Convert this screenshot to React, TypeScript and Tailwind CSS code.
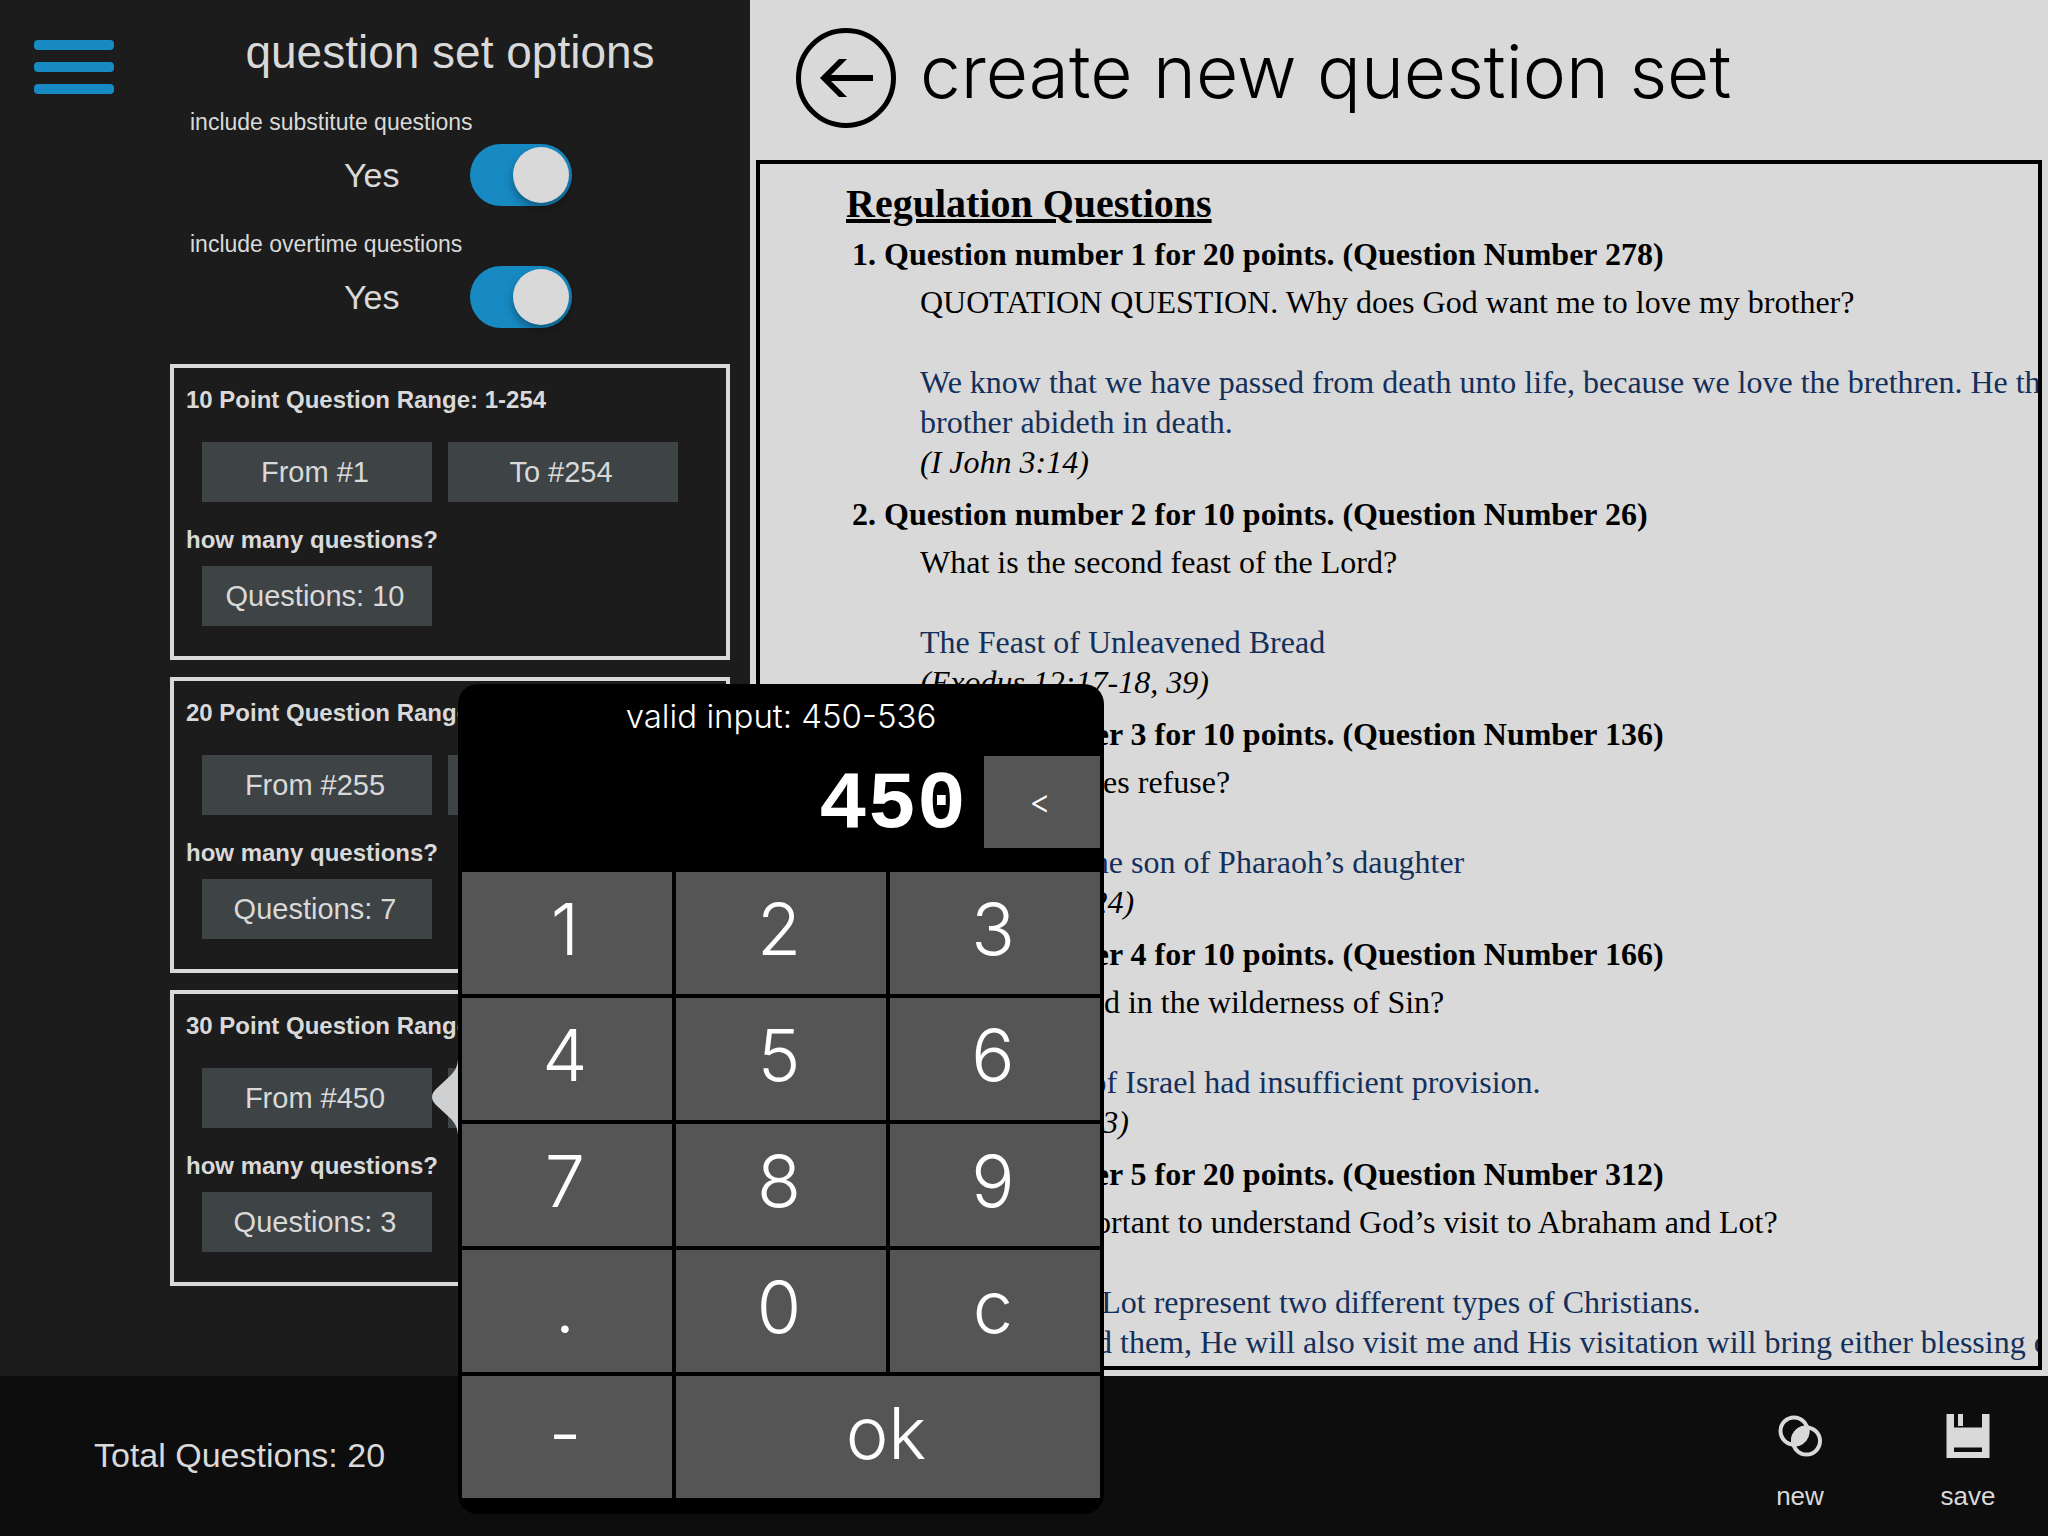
import { useState } from 'react';

type Range = { points: number; from: number; to: number; count: number };
type Question = {
  points: number;
  ref: number;
  text: string;
  answer: string[];
  source?: string;
};

const RANGES: Range[] = [
  { points: 10, from: 1, to: 254, count: 10 },
  { points: 20, from: 255, to: 449, count: 7 },
  { points: 30, from: 450, to: 536, count: 3 },
];

const QUESTIONS: Question[] = [
  {
    points: 20,
    ref: 278,
    text: 'QUOTATION QUESTION. Why does God want me to love my brother?',
    answer: [
      'We know that we have passed from death unto life, because we love the brethren. He that loveth not his',
      'brother abideth in death.',
    ],
    source: '(I John 3:14)',
  },
  {
    points: 10,
    ref: 26,
    text: 'What is the second feast of the Lord?',
    answer: ['The Feast of Unleavened Bread'],
    source: '(Exodus 12:17-18, 39)',
  },
  {
    points: 10,
    ref: 136,
    text: 'What did Moses refuse?',
    answer: ['To be called the son of Pharaoh’s daughter'],
    source: '(Hebrews 11:24)',
  },
  {
    points: 10,
    ref: 166,
    text: 'What happened in the wilderness of Sin?',
    answer: ['The children of Israel had insufficient provision.'],
    source: '(Exodus 16:2-3)',
  },
  {
    points: 20,
    ref: 312,
    text: 'Why is it important to understand God’s visit to Abraham and Lot?',
    answer: [
      'Abraham and Lot represent two different types of Christians.',
      'As God visited them, He will also visit me and His visitation will bring either blessing or',
    ],
  },
];

const KEYS = ['1', '2', '3', '4', '5', '6', '7', '8', '9', '.', '0', 'c', '-'];

function ToggleRow({ id, label }: { id: string; label: string }) {
  const [on, setOn] = useState(true);
  return (
    <div>
      <label htmlFor={id} className="block pl-5 text-[23px] leading-7">
        {label}
      </label>
      <div className="mt-2 flex items-center pl-[174px]">
        <span className="w-[126px] text-[34px] leading-[62px]">{on ? 'Yes' : 'No'}</span>
        <input
          id={id}
          type="checkbox"
          role="switch"
          checked={on}
          onChange={(e) => setOn(e.target.checked)}
          className="flex h-[62px] w-[102px] appearance-none items-center rounded-full bg-[#555555] px-[3px] before:size-14 before:rounded-full before:bg-[#d9d9d9] before:shadow-[0_5px_10px_rgba(0,0,0,0.35)] before:content-[''] checked:justify-end checked:bg-[#178ac3]"
        />
      </div>
    </div>
  );
}

function SlateButton({ children }: { children: React.ReactNode }) {
  return (
    <button type="button" className="h-[60px] w-[230px] bg-[#3e4346] pr-1 text-[29px] leading-[60px]">
      {children}
    </button>
  );
}

function RangeCard({ points, from, to, count }: Range) {
  return (
    <section className="border-4 border-[#d9d9d9] px-3 pt-4 pb-[30px]">
      <h2 className="text-2xl leading-8 font-bold whitespace-nowrap">
        {`${points} Point Question Range: ${from}-${to}`}
      </h2>
      <div className="mt-[26px] flex gap-4 pl-4">
        <SlateButton>{`From #${from}`}</SlateButton>
        <SlateButton>{`To #${to}`}</SlateButton>
      </div>
      <p className="mt-[22px] text-2xl leading-8 font-bold">how many questions?</p>
      <div className="mt-[10px] pl-4">
        <SlateButton>{`Questions: ${count}`}</SlateButton>
      </div>
    </section>
  );
}

function Sidebar() {
  return (
    <aside className="flex w-[750px] shrink-0 bg-[#1c1c1c] pr-5">
      <div className="w-[170px] shrink-0 pt-10 pl-[34px]">
        <button type="button" aria-label="Menu" className="flex w-20 flex-col gap-3">
          <span className="h-[10px] w-full rounded-sm bg-[#178ac3]" />
          <span className="h-[10px] w-full rounded-sm bg-[#178ac3]" />
          <span className="h-[10px] w-full rounded-sm bg-[#178ac3]" />
        </button>
      </div>
      <div className="min-w-0 flex-1 pt-6">
        <h1 className="text-center text-[46px] leading-[56px]">question set options</h1>
        <div className="mt-7 flex flex-col gap-6">
          <ToggleRow id="substitute" label="include substitute questions" />
          <ToggleRow id="overtime" label="include overtime questions" />
        </div>
        <div className="mt-9 flex flex-col gap-[17px]">
          {RANGES.map((r) => (
            <RangeCard key={r.points} {...r} />
          ))}
        </div>
      </div>
    </aside>
  );
}

function QuestionItem({ q, n }: { q: Question; n: number }) {
  return (
    <li>
      <h3 className="flex font-bold">
        <span className="w-8 shrink-0">{n}.</span>
        {`Question number ${n} for ${q.points} points. (Question Number ${q.ref})`}
      </h3>
      <div className="mt-2 pl-[68px]">
        <p>{q.text}</p>
        <div className="mt-10 text-[#14305a]">
          {q.answer.map((line) => (
            <p key={line}>{line}</p>
          ))}
        </div>
        {q.source && <p className="italic">{q.source}</p>}
      </div>
    </li>
  );
}

function Document() {
  return (
    <main className="flex min-w-0 flex-1 flex-col bg-[#d9d9d9] px-[6px] pb-[6px] text-black">
      <header className="flex h-40 shrink-0 items-start gap-6 pt-7 pl-10">
        <button type="button" aria-label="Back" className="size-[100px] shrink-0">
          <svg viewBox="0 0 100 100" className="size-full" fill="none" stroke="currentColor">
            <circle cx="50" cy="50" r="47.500" strokeWidth="5" />
            <path d="M77 50H32" strokeWidth="6" />
            <path d="M51 31H43L24 50L43 69H51L34 52V48Z" fill="currentColor" stroke="none" />
          </svg>
        </button>
        <h1 className="font-['Inter',sans-serif] text-[73px] leading-[88px] font-light whitespace-nowrap">
          create new question set
        </h1>
      </header>
      <article className="min-h-0 flex-1 overflow-hidden border-4 border-black pt-4 pl-[86px] font-['Liberation_Serif',serif] text-[32px] leading-10 whitespace-nowrap">
        <h2 className="text-[40px] leading-[48px] font-bold underline">Regulation Questions</h2>
        <ol className="mt-[6px] flex flex-col gap-3 pl-[6px]">
          {QUESTIONS.map((q, i) => (
            <QuestionItem key={q.ref} q={q} n={i + 1} />
          ))}
        </ol>
      </article>
    </main>
  );
}

function Keypad() {
  const [value, setValue] = useState('450');
  const press = (k: string) => setValue((v) => (k === 'c' ? '' : v + k));
  return (
    <div
      role="dialog"
      aria-label="Number pad"
      className="absolute top-[684px] left-[458px] z-10 w-[646px] rounded-[20px] bg-black px-1 pb-4 font-['Inter',sans-serif] font-light text-white"
    >
      <svg
        viewBox="0 0 26 76"
        className="absolute top-[375px] right-full h-[76px] w-[26px]"
        fill="#cfd0d2"
        aria-hidden="true"
      >
        <path d="M26 0C25.500 8 23 12 18 17L4 30Q0 34 0 38Q0 42 4 46L18 59C23 64 25.500 68 26 76Z" />
      </svg>
      <p className="pt-3 text-center text-[33px] leading-10">valid input: 450-536</p>
      <div className="mt-5 flex h-[92px] items-center">
        <output className="flex-1 pt-2 pr-[18px] text-right font-['Liberation_Mono',monospace] text-[82px] leading-[92px] font-bold">
          {value}
        </output>
        <button
          type="button"
          aria-label="Backspace"
          onClick={() => setValue((v) => v.slice(0, -1))}
          className="h-[92px] w-[116px] bg-[#555555] pr-1 text-[33px]"
        >
          &lt;
        </button>
      </div>
      <div className="mt-6 grid grid-cols-3 gap-1">
        {KEYS.map((k) => (
          <button
            key={k}
            type="button"
            onClick={() => press(k)}
            className="h-[122px] bg-[#555555] pr-1 pb-2 text-[72px] leading-[114px]"
          >
            {k}
          </button>
        ))}
        <button
          type="button"
          className="col-span-2 h-[122px] bg-[#555555] pr-1 pb-2 text-[72px] leading-[114px]"
        >
          ok
        </button>
      </div>
    </div>
  );
}

function Footer() {
  return (
    <footer className="flex h-40 shrink-0 items-start justify-between bg-[#0d0d0d] pl-[94px]">
      <p className="pt-[58px] text-[34px] leading-[42px]">Total Questions: 20</p>
      <div className="flex">
        <button type="button" className="flex w-44 flex-col items-center pt-[38px]">
          <svg viewBox="0 0 44 44" className="size-11" fill="none" stroke="#d9d9d9" strokeWidth="4">
            <circle cx="16" cy="17" r="13.500" />
            <circle cx="28.500" cy="27" r="13.500" />
            <path
              d="M30.600 11.600A15.500 15.500 0 0 1 13.900 32.400A15.500 15.500 0 0 1 30.600 11.600Z"
              fill="#d9d9d9"
              stroke="none"
            />
          </svg>
          <span className="mt-[22px] text-[26px] leading-8">new</span>
        </button>
        <button type="button" className="flex w-40 flex-col items-center pt-[38px]">
          <svg viewBox="0 0 44 44" className="size-11" fill="#d9d9d9">
            <path
              fillRule="evenodd"
              d="M0.500 0H8V13.500H36V0H43.500V44H0.500ZM8 33.500V38H36V33.500Z"
            />
            <path d="M12 0H17V12H12Z" />
          </svg>
          <span className="mt-[22px] text-[26px] leading-8">save</span>
        </button>
      </div>
    </footer>
  );
}

export default function App() {
  return (
    <div className="relative flex h-screen flex-col overflow-hidden bg-[#0d0d0d] font-['Liberation_Sans',Arial,sans-serif] text-[#d9d9d9]">
      <div className="flex min-h-0 flex-1">
        <Sidebar />
        <Document />
      </div>
      <Footer />
      <Keypad />
    </div>
  );
}
